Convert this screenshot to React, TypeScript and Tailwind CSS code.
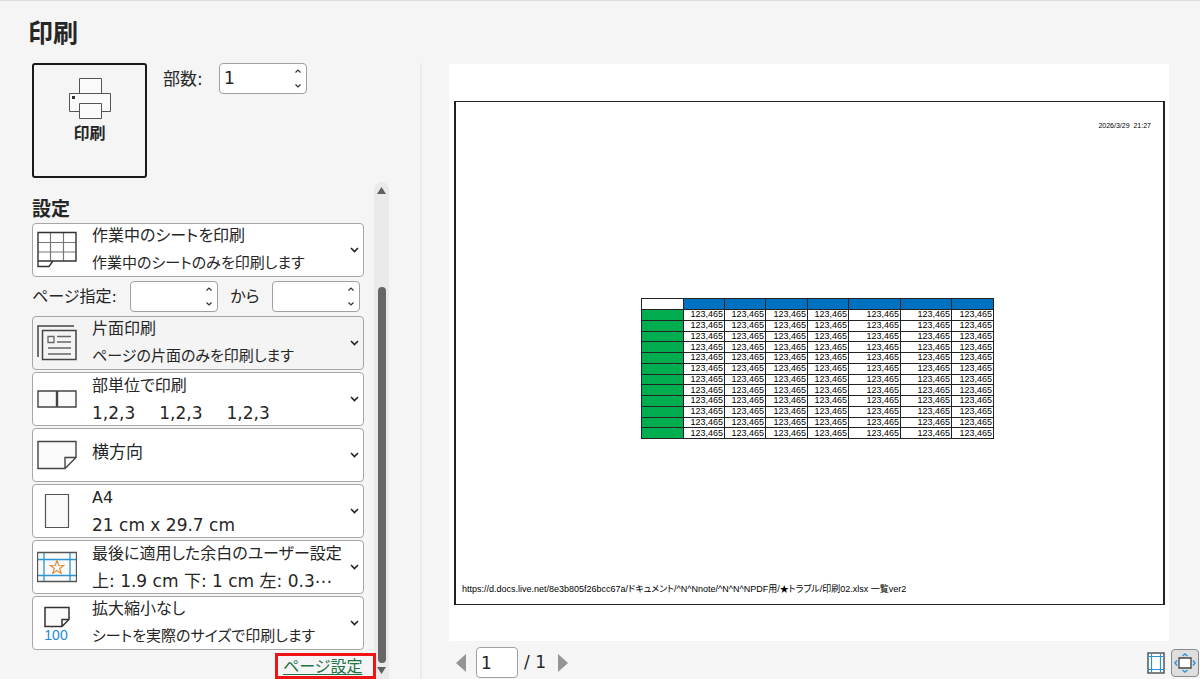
import React, { useState } from 'react';

const ROWS = 12;
const VALUE = '123,465';
const columns = ['w-[42px]', 'w-[41px]', 'w-[41px]', 'w-[42px]', 'w-[41px]', 'w-[52px]', 'w-[51px]', 'w-[42px]'];

export default function App() {
    const [page, setPage] = useState('1');

    return (
        <div className="flex min-h-screen flex-col border-t border-[#dcdcdc] bg-[#f5f5f5] font-['DejaVu_Sans','Noto_Sans_CJK_JP',sans-serif] text-[17px] text-[#262626] [font-feature-settings:'palt']">
            <h1 className="pt-[13px] pl-7 text-[25px] leading-[39px] font-bold">印刷</h1>
            <div className="flex flex-1 gap-7">
                <aside className="flex w-[392px] shrink-0 flex-col pt-2.5 pl-8">
                    <div className="flex items-start">
                        <button className="flex h-[115px] w-[115px] flex-col items-center rounded-[3px] border-2 border-[#1a1a1a] pt-3 text-base leading-5 font-bold">
                            <PrinterIcon />
                            <span className="mt-[3px]">印刷</span>
                        </button>
                        <label htmlFor="copies" className="ml-4 w-14 leading-8">部数:</label>
                        <SpinBox id="copies" name="部数" initial="1" />
                    </div>
                    <div className="mt-1 flex flex-1">
                        <section className="w-[332px] shrink-0">
                            <h2 className="mt-3.5 mb-px text-[19px] leading-[26px] font-bold">設定</h2>
                            <Setting icon={<SheetIcon />} title="作業中のシートを印刷" detail="作業中のシートのみを印刷します" />
                            <div className="flex h-[39px] items-center">
                                <label htmlFor="from" className="w-[98px] text-base">ページ指定:</label>
                                <SpinBox id="from" name="開始ページ" initial="" />
                                <label htmlFor="to" className="w-[54px] text-center text-base">から</label>
                                <SpinBox id="to" name="終了ページ" initial="" />
                            </div>
                            <div className="flex flex-col gap-0.5">
                                <Setting muted icon={<OneSidedIcon />} title="片面印刷" detail="ページの片面のみを印刷します" />
                                <Setting latin icon={<CollateIcon />} title="部単位で印刷" detail={<span className="flex gap-6"><span>1,2,3</span><span>1,2,3</span><span>1,2,3</span></span>} />
                                <Setting icon={<LandscapeIcon />} title="横方向" />
                                <Setting latin icon={<PaperIcon />} title="A4" detail="21 cm x 29.7 cm" />
                                <Setting latin icon={<MarginIcon />} title="最後に適用した余白のユーザー設定" detail="上: 1.9 cm 下: 1 cm 左: 0.3⋯" />
                                <Setting icon={<ScaleIcon />} title="拡大縮小なし" detail="シートを実際のサイズで印刷します" />
                            </div>
                            <div className="-mr-3 mt-[3px] flex justify-end">
                                <a href="#" className="relative z-10 h-[26px] w-[101px] border-[3px] border-[#f01414] pl-[5px] text-base leading-[22px] text-[#217346] underline underline-offset-2">ページ設定</a>
                            </div>
                        </section>
                        <Scrollbar />
                    </div>
                </aside>
                <main className="mt-2.5 flex min-w-0 flex-1 border-l-2 border-[#ebebeb] pl-[27px]">
                    <div className="flex flex-1 flex-col pt-px">
                        <Preview />
                        <div className="flex h-[38px] items-start pt-1.5">
                            <form className="flex flex-1 items-center">
                                <button type="button" aria-label="前のページ" className="ml-1.5">
                                    <svg width="11" height="20"><path d="M11 1v18L1 10z" fill="#959595" /></svg>
                                </button>
                                <input aria-label="ページ番号" value={page} onChange={(e) => setPage(e.target.value)} className="ml-2.5 h-[31px] w-[42px] rounded border border-[#a0a0a0] bg-white pl-1" />
                                <span className="ml-1.5">/ 1</span>
                                <button type="button" aria-label="次のページ" className="ml-3">
                                    <svg width="11" height="20"><path d="M0 1v18l10-9z" fill="#959595" /></svg>
                                </button>
                            </form>
                            <div className="-mr-[30px] mt-0.5 flex items-center gap-1.5">
                                <button aria-label="余白の表示"><MarginsViewIcon /></button>
                                <button aria-label="ページに合わせる" className="rounded border border-[#8a8a8a] bg-[#dedede]"><FitPageIcon /></button>
                            </div>
                        </div>
                    </div>
                    <div className="w-[31px] shrink-0" />
                </main>
            </div>
        </div>
    );
}

function Setting(props: { icon: React.ReactNode; title: string; detail?: React.ReactNode; muted?: boolean; latin?: boolean }) {
    return (
        <button aria-haspopup="listbox" className={`flex h-[54px] w-full items-center rounded border border-[#a6a6a6] pr-1 pl-1 text-left ${props.muted ? 'bg-[#f4f4f4]' : 'bg-white'}`}>
            {props.icon}
            <span className="ml-[15px] flex h-full min-w-0 flex-1 flex-col whitespace-nowrap">
                <span className={props.detail ? (props.latin ? 'text-base leading-[26px]' : 'text-base leading-6') : 'text-[17px] leading-[46px]'}>{props.title}</span>
                {props.detail && <span className={props.latin ? 'text-[17px] leading-[28px]' : 'text-[15px] leading-[30px]'}>{props.detail}</span>}
            </span>
            <svg width="9" height="6" fill="none" stroke="#222" strokeWidth="1.6"><path d="M1 1l3.5 3.5L8 1" /></svg>
        </button>
    );
}

function SpinBox(props: { id: string; name: string; initial: string }) {
    const [value, setValue] = useState(props.initial);
    const step = (n: number) => setValue(String(Math.max(1, Number(value) + n)));

    return (
        <div className="flex h-[31px] w-[88px] rounded border border-[#a0a0a0] bg-white">
            <input id={props.id} inputMode="numeric" value={value} onChange={(e) => setValue(e.target.value)} className="w-0 flex-1 bg-transparent pl-1 outline-none" />
            <div className="flex w-4 flex-col items-center justify-between py-1">
                <button type="button" aria-label={`${props.name}を増やす`} onClick={() => step(1)}>
                    <svg width="6" height="6" fill="none" stroke="#333" strokeWidth="1.2" className="block"><path d="M.5 4.500L3 2l2.500 2.500" /></svg>
                </button>
                <button type="button" aria-label={`${props.name}を減らす`} onClick={() => step(-1)}>
                    <svg width="6" height="6" fill="none" stroke="#333" strokeWidth="1.2" className="block"><path d="M.5 1.500L3 4l2.500-2.500" /></svg>
                </button>
            </div>
        </div>
    );
}

function Scrollbar() {
    return (
        <div className="ml-2.5 flex w-[15px] shrink-0 flex-col items-center rounded-t-full bg-[#eaeaea] pt-[5px] pb-[5px]">
            <svg width="9" height="7"><path d="M4.5 0L9 7H0z" fill="#606060" /></svg>
            <div className="mt-[93px] w-2 flex-1 rounded-full bg-[#666]" />
            <svg width="9" height="7" className="mt-1"><path d="M0 0h9L4.5 7z" fill="#606060" /></svg>
        </div>
    );
}

function Preview() {
    const rows = [];
    for (let r = 0; r < ROWS; r++) {
        rows.push(
            <tr key={r}>
                <th className="border border-[#222] bg-[#00ae50] p-0"></th>
                {columns.slice(1).map((_, i) => (
                    <td key={i} className="border border-[#222] p-0 pr-px text-right text-[9px] leading-[9px] text-black">{VALUE}</td>
                ))}
            </tr>
        );
    }

    return (
        <div className="flex flex-1 flex-col bg-white pt-[37px] pr-1 pb-9 pl-[5px]">
            <div className="flex flex-1 flex-col border-x-2 border-y border-[#222] font-['Liberation_Sans','Noto_Sans_CJK_JP',sans-serif] text-black">
                <p className="pt-[19px] pr-3 text-right text-[7px] leading-[10px]">2026/3/29&nbsp; 21:27</p>
                <div className="flex flex-1 items-start justify-center pt-[167px] pl-4">
                    <table className="h-[141px] table-fixed border-collapse">
                        <colgroup>
                            {columns.map((w, i) => <col key={i} className={w} />)}
                        </colgroup>
                        <thead>
                            <tr className="h-[11px]">
                                <th className="border border-[#222] bg-white"></th>
                                {columns.slice(1).map((_, i) => <th key={i} className="border border-[#222] bg-[#0070c0]"></th>)}
                            </tr>
                        </thead>
                        <tbody>{rows}</tbody>
                    </table>
                </div>
                <p className="pb-2 pl-1.5 text-[9px] leading-[13px]">https://d.docs.live.net/8e3b805f26bcc67a/ドキュメント/^N^Nnote/^N^N^NPDF用/★トラブル/印刷02.xlsx 一覧ver2</p>
            </div>
        </div>
    );
}

function PrinterIcon() {
    return (
        <svg width="42" height="44" fill="#fafafa" stroke="#555">
            <path d="M10.5 16V1.5h22V16" />
            <path d="M.5 16.5h41v18H.5z" />
            <path d="M10.5 26.5h22v15h-22z" />
            <path d="M3 19h3v3H3z" fill="#333" stroke="none" />
        </svg>
    );
}

function SheetIcon() {
    return (
        <svg width="40" height="40" fill="none">
            <path d="M1 12.5h38M1 22h38M13.5 2v29M26.5 2v29" stroke="#777" strokeWidth="1.2" />
            <path d="M1 31V2.5h38V31H16l-4 5.5H1V31h15" stroke="#333" strokeWidth="1.4" />
        </svg>
    );
}

function OneSidedIcon() {
    return (
        <svg width="40" height="40" fill="none" stroke="#444" strokeWidth="1.5">
            <path d="M1 34V3h36" />
            <path d="M5.5 7.5H39v29H5.5z" />
            <path d="M11 13.5h6v6h-6zM20 13.5h14M20 19h14M11 25h23M11 31h23" stroke="#666" strokeWidth="1.3" />
        </svg>
    );
}

function CollateIcon() {
    return (
        <svg width="40" height="40" fill="#fafafa" stroke="#444" strokeWidth="1.4">
            <path d="M1 12h18.5v16H1zM20.5 12H39v16H20.5z" />
        </svg>
    );
}

function LandscapeIcon() {
    return (
        <svg width="40" height="40" fill="#fafafa" stroke="#444" strokeWidth="1.4">
            <path d="M1 6.5h38v16L28 33.5H1zM28 33.5v-11h11" />
        </svg>
    );
}

function PaperIcon() {
    return (
        <svg width="40" height="40" fill="#fafafa" stroke="#555" strokeWidth="1.2">
            <path d="M8.5 3.5h23v33h-23z" />
        </svg>
    );
}

function MarginIcon() {
    return (
        <svg width="40" height="40" fill="#fafafa">
            <path d="M.5 5.5h39v29H.5z" stroke="#555" strokeWidth="1.3" />
            <path d="M7 6v28M33 6v28M1 12.5h38M1 28.5h38" stroke="#2b93d6" strokeWidth="1.3" />
            <path d="M20 13.5l1.7 4.8 5 .1-4 3.1 1.5 4.9-4.2-2.9-4.2 2.9 1.5-4.9-4-3.1 5-.1z" stroke="#e08a35" strokeWidth="1.1" />
        </svg>
    );
}

function ScaleIcon() {
    return (
        <svg width="40" height="44" fill="#fafafa" stroke="#333" strokeWidth="1.5">
            <path d="M8 6.5h24v12l-7 7H8zM25 25.5v-7h7" />
            <text x="19" y="39" textAnchor="middle" fill="#1e88d0" stroke="none" className="font-['Liberation_Sans',sans-serif] text-sm">100</text>
        </svg>
    );
}

function MarginsViewIcon() {
    return (
        <svg width="18" height="22" fill="#fff">
            <path d="M1 1h16v20H1z" stroke="#555" strokeWidth="1.5" />
            <path d="M4.5 1v20M13.5 1v20M1 4.5h16M1 17.5h16" stroke="#2b93d6" strokeWidth="1.2" />
        </svg>
    );
}

function FitPageIcon() {
    return (
        <svg width="26" height="26" fill="none">
            <path d="M7 8h12v10H7z" fill="#fff" stroke="#444" strokeWidth="1.3" />
            <path d="M10.5 6L13 4l2.5 2M10.5 20l2.5 2 2.5-2M5 10.5L3 13l2 2.5M21 10.5l2 2.5-2 2.5" stroke="#2b93d6" strokeWidth="1.4" />
        </svg>
    );
}
